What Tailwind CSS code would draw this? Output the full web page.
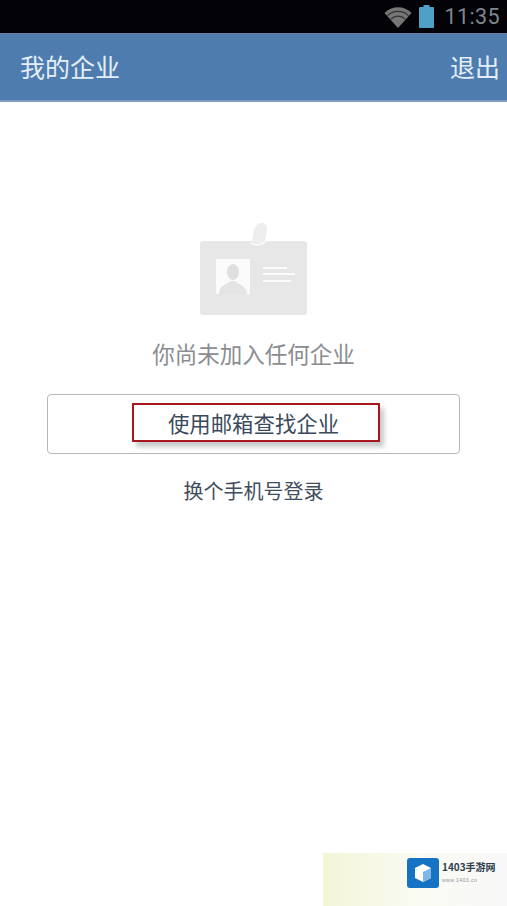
<!DOCTYPE html>
<html><head><meta charset="utf-8">
<script src="https://cdn.jsdelivr.net/npm/@tailwindcss/browser@4"></script>
</head>
<body class="m-0">
<div class="relative w-[507px] h-[906px] overflow-hidden bg-white flex flex-col font-['Noto_Sans_CJK_SC','Liberation_Sans',sans-serif]">
  <div class="h-[33px] bg-[#020207] flex items-center justify-end pr-[7px] shrink-0">
    <svg width="28" height="22" viewBox="0 0 28 22" class="mr-[7px]"><path d="M0.5 7 A19 19 0 0 1 27.5 7 L14 22 Z" fill="#767676"/><path d="M3.5 9.6 A15 15 0 0 1 24.5 9.6" stroke="#333" stroke-width="1.2" fill="none"/><path d="M7 13 A10 10 0 0 1 21 13" stroke="#333" stroke-width="1.2" fill="none"/></svg>
    <svg width="15" height="23" viewBox="0 0 15 23" class="mr-[10px]"><path d="M4.5 0h6v2h3.5a1 1 0 0 1 1 1v19a1 1 0 0 1-1 1H1a1 1 0 0 1-1-1V3a1 1 0 0 1 1-1h3.5z" fill="#4f9fc9"/></svg>
    <span class="text-[21.5px] leading-none text-[#7f878c] font-['Roboto',sans-serif] tracking-[0.4px]">11:35</span>
  </div>
  <div class="h-[69px] shrink-0 bg-[#4f7cae] border-t border-[#6f7fa8] border-b-[2px] border-b-[#7d9cc0] flex items-center justify-between pl-[20px] pr-[7px] pb-[2px] text-[25px] leading-none text-[#e3eef8]">
    <span>我的企业</span><span>退出</span>
  </div>
  <div class="flex flex-col items-center pt-[120px]">
    <svg width="112" height="94" viewBox="0 0 112 94">
      <rect x="2" y="19" width="107" height="74" rx="3" fill="#e7e7e7"/>
      <path d="M54 23 C54 14 56 6 59 3 C63 -1 69 1 69 6 C69 12 67 18 66 23 Z" fill="#eeeeee"/>
      <path d="M53 21 Q60 26 68 19" stroke="#fbfbfb" stroke-width="1.5" fill="none"/>
      <rect x="18" y="37" width="34" height="35" fill="#fbfbfb"/>
      <ellipse cx="35" cy="50" rx="6" ry="8" fill="#e0e0e0"/>
      <path d="M21 72 C21 63 30 62 33 59 H37 C40 62 49 64 49 72 Z" fill="#e4e4e4"/>
      <rect x="65" y="45" width="24" height="2" fill="#fbfbfb"/>
      <rect x="65" y="51" width="32" height="2" fill="#fbfbfb"/>
      <rect x="65" y="58" width="28" height="2" fill="#fbfbfb"/>
    </svg>
    <p class="mt-[22px] text-[22.5px] leading-[30px] text-[#8a8d90]">你尚未加入任何企业</p>
    <div class="mt-[26px] w-[413px] h-[60px] rounded-[4px] border border-[#b4b6b8] flex items-center justify-center">
      <div class="ml-[4px] mb-[3px] w-[248px] h-[39px] border-2 border-[#a8161f] shadow-[4px_5px_5px_#c6c9c9] flex items-center justify-center text-[21.4px] text-[#3a4a5c]"><span class="-ml-[4px] mt-[2px]">使用邮箱查找企业</span></div>
    </div>
    <p class="mt-[23px] text-[20px] leading-[28px] text-[#3f4d5c]">换个手机号登录</p>
  </div>
  <div class="absolute right-0 bottom-0 w-[184px] h-[53px] bg-gradient-to-r from-[#f3f5d8] via-[#fafbf2] to-[#f8f8f8] flex items-start justify-end pr-[10px] pt-[5px] gap-[3px]">
    <div class="relative w-[32px] h-[30px] rounded-[3px] bg-[#1673c4] flex items-center justify-center shrink-0">
      <svg width="18" height="20" viewBox="0 0 18 20"><path d="M9 1 L17 5 V15 L9 19 L1 15 V5 Z" fill="#fff"/><path d="M9 9 L17 5 V15 L9 19 Z" fill="#7fb8e6"/></svg>
    </div>
    <div class="flex flex-col pt-[3px] w-[55px]">
      <span class="text-[10px] leading-[12px] font-bold text-[#30404f] whitespace-nowrap">1403手游网</span>
      <span class="mt-[3px] text-[5px] leading-[8px] text-[#8a9299] font-['Liberation_Sans',sans-serif] tracking-[0.5px]">www.1403.cn</span>
    </div>
  </div>
</div>
</body></html>
